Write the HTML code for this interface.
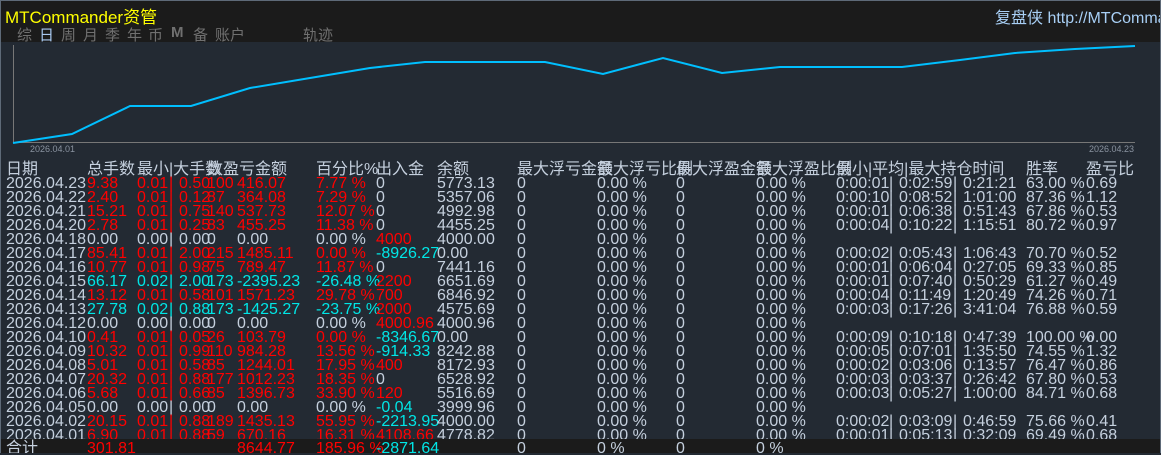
<!DOCTYPE html>
<html><head><meta charset="utf-8"><style>
*{margin:0;padding:0;box-sizing:border-box}
body{width:1161px;height:453px;overflow:hidden;background:#232a33;font-family:"Liberation Sans","Noto Sans CJK SC",sans-serif;position:relative;color:#c5d0de}
#frame{position:absolute;left:0;top:0;width:1161px;height:453px;border:1px solid #5e6a78;border-bottom:none;pointer-events:none}
#hdr{position:absolute;left:0;top:0;width:1161px;height:42px;background:#1b1b1b}
.t{position:absolute;white-space:nowrap}
#title{left:5px;top:3px;font-size:17px;color:#ffff00}
#right{left:995px;top:4px;font-size:16px;color:#a8cff5}
.tab{top:24px;font-size:15px;color:#707070}
#day{left:37px;top:23px;width:18px;height:19px;background:#2c3644;border-radius:2px}
#rows{position:absolute;left:0;top:2px;width:1161px;height:453px}
.r{position:absolute;left:0;width:1161px;height:14px;font-size:16px;line-height:14px}
.r span{position:absolute;top:0;white-space:nowrap}
.R{color:#ff0000}.C{color:#00e6e6}.G{color:#c5d0de}
.a{left:6px}.b{left:87px}.c{left:137px}.bar{left:169px}.d{left:179px}.e{left:207px}.f{left:237px}.g{left:316px}.h{left:376px}.i{left:437px}
.j{left:517px}.k{left:597px}.l{left:676px}.m{left:756px}.n{left:836px}.o{left:889px}.p{left:899px}.q{left:953px}.s{left:963px}.u{left:1026px}.v{left:1086px}
#foot{position:absolute;left:0;top:439px;width:1161px;height:14px;background:#1b1b1b}
</style></head><body>
<div id="hdr"></div>
<div class="t" id="title">MTCommander资管</div>
<div class="t" id="right">复盘侠 http://MTCommander</div>
<div id="day"></div>
<div class="t tab" style="left:17px">综</div>
<div class="t tab" style="left:39px;color:#a8c8f0">日</div>
<div class="t tab" style="left:61px">周</div>
<div class="t tab" style="left:83px">月</div>
<div class="t tab" style="left:105px">季</div>
<div class="t tab" style="left:127px">年</div>
<div class="t tab" style="left:148px">币</div>
<div class="t tab" style="left:171px;font-weight:bold">M</div>
<div class="t tab" style="left:193px">备</div>
<div class="t tab" style="left:215px">账户</div>
<div class="t tab" style="left:303px">轨迹</div>
<svg style="position:absolute;left:0;top:42px" width="1161" height="115">
<line x1="13.5" y1="3" x2="13.5" y2="100" stroke="#777" stroke-width="1"/>
<line x1="13" y1="100.5" x2="1135" y2="100.5" stroke="#777" stroke-width="1"/>
<polyline fill="none" stroke="#00bfff" stroke-width="2" points="13,101 72,92 130,64 191,64 250,46 310,36 370,26 425,20 485,20 545,20 603,32 663,16 722,31 780,25 840,25 902,25 960,18 1015,11 1075,7 1135,4"/>
<text x="30" y="110" font-size="9" fill="#8a93a0" font-family="Liberation Sans">2026.04.01</text>
<text x="1089" y="110" font-size="9" fill="#8a93a0" font-family="Liberation Sans">2026.04.23</text>
</svg>
<div id="foot"></div>
<div id="rows">
<div class="r G" style="top:161px"><span class="a">日期</span><span class="b">总手数</span><span class="c">最小|大手数</span><span class="e">数盈亏金额</span><span class="g">百分比%</span><span class="h">出入金</span><span class="i">余额</span><span class="j">最大浮亏金额</span><span class="k">最大浮亏比例</span><span class="l">最大浮盈金额</span><span class="m">最大浮盈比例</span><span class="n">最小|平均|最大持仓时间</span><span class="u">胜率</span><span class="v">盈亏比</span></div>

<div class="r" style="top:175px"><span class="a G">2026.04.23</span><span class="b R">9.38</span><span class="c R">0.01</span><span class="bar R">|</span><span class="d R">0.50</span><span class="e R">100</span><span class="f R">416.07</span><span class="g R">7.77 %</span><span class="h G">0</span><span class="i G">5773.13</span><span class="j G">0</span><span class="k G">0.00 %</span><span class="l G">0</span><span class="m G">0.00 %</span><span class="n G">0:00:01</span><span class="o G">|</span><span class="p G">0:02:59</span><span class="q G">|</span><span class="s G">0:21:21</span><span class="u G">63.00 %</span><span class="v G">0.69</span></div>
<div class="r" style="top:189px"><span class="a G">2026.04.22</span><span class="b R">2.40</span><span class="c R">0.01</span><span class="bar R">|</span><span class="d R">0.12</span><span class="e R">87</span><span class="f R">364.08</span><span class="g R">7.29 %</span><span class="h G">0</span><span class="i G">5357.06</span><span class="j G">0</span><span class="k G">0.00 %</span><span class="l G">0</span><span class="m G">0.00 %</span><span class="n G">0:00:10</span><span class="o G">|</span><span class="p G">0:08:52</span><span class="q G">|</span><span class="s G">1:01:00</span><span class="u G">87.36 %</span><span class="v G">1.12</span></div>
<div class="r" style="top:203px"><span class="a G">2026.04.21</span><span class="b R">15.21</span><span class="c R">0.01</span><span class="bar R">|</span><span class="d R">0.75</span><span class="e R">140</span><span class="f R">537.73</span><span class="g R">12.07 %</span><span class="h G">0</span><span class="i G">4992.98</span><span class="j G">0</span><span class="k G">0.00 %</span><span class="l G">0</span><span class="m G">0.00 %</span><span class="n G">0:00:01</span><span class="o G">|</span><span class="p G">0:06:38</span><span class="q G">|</span><span class="s G">0:51:43</span><span class="u G">67.86 %</span><span class="v G">0.53</span></div>
<div class="r" style="top:217px"><span class="a G">2026.04.20</span><span class="b R">2.78</span><span class="c R">0.01</span><span class="bar R">|</span><span class="d R">0.25</span><span class="e R">83</span><span class="f R">455.25</span><span class="g R">11.38 %</span><span class="h G">0</span><span class="i G">4455.25</span><span class="j G">0</span><span class="k G">0.00 %</span><span class="l G">0</span><span class="m G">0.00 %</span><span class="n G">0:00:04</span><span class="o G">|</span><span class="p G">0:10:22</span><span class="q G">|</span><span class="s G">1:15:51</span><span class="u G">80.72 %</span><span class="v G">0.97</span></div>
<div class="r" style="top:231px"><span class="a G">2026.04.18</span><span class="b G">0.00</span><span class="c G">0.00</span><span class="bar G">|</span><span class="d G">0.00</span><span class="e G">0</span><span class="f G">0.00</span><span class="g G">0.00 %</span><span class="h R">4000</span><span class="i G">4000.00</span><span class="j G">0</span><span class="k G">0.00 %</span><span class="l G">0</span><span class="m G">0.00 %</span></div>
<div class="r" style="top:245px"><span class="a G">2026.04.17</span><span class="b R">85.41</span><span class="c R">0.01</span><span class="bar R">|</span><span class="d R">2.00</span><span class="e R">215</span><span class="f R">1485.11</span><span class="g R">0.00 %</span><span class="h C">-8926.27</span><span class="i G">0.00</span><span class="j G">0</span><span class="k G">0.00 %</span><span class="l G">0</span><span class="m G">0.00 %</span><span class="n G">0:00:02</span><span class="o G">|</span><span class="p G">0:05:43</span><span class="q G">|</span><span class="s G">1:06:43</span><span class="u G">70.70 %</span><span class="v G">0.52</span></div>
<div class="r" style="top:259px"><span class="a G">2026.04.16</span><span class="b R">10.77</span><span class="c R">0.01</span><span class="bar R">|</span><span class="d R">0.98</span><span class="e R">75</span><span class="f R">789.47</span><span class="g R">11.87 %</span><span class="h G">0</span><span class="i G">7441.16</span><span class="j G">0</span><span class="k G">0.00 %</span><span class="l G">0</span><span class="m G">0.00 %</span><span class="n G">0:00:01</span><span class="o G">|</span><span class="p G">0:06:04</span><span class="q G">|</span><span class="s G">0:27:05</span><span class="u G">69.33 %</span><span class="v G">0.85</span></div>
<div class="r" style="top:273px"><span class="a G">2026.04.15</span><span class="b C">66.17</span><span class="c C">0.02</span><span class="bar C">|</span><span class="d C">2.00</span><span class="e C">173</span><span class="f C">-2395.23</span><span class="g C">-26.48 %</span><span class="h R">2200</span><span class="i G">6651.69</span><span class="j G">0</span><span class="k G">0.00 %</span><span class="l G">0</span><span class="m G">0.00 %</span><span class="n G">0:00:01</span><span class="o G">|</span><span class="p G">0:07:40</span><span class="q G">|</span><span class="s G">0:50:29</span><span class="u G">61.27 %</span><span class="v G">0.49</span></div>
<div class="r" style="top:287px"><span class="a G">2026.04.14</span><span class="b R">13.12</span><span class="c R">0.01</span><span class="bar R">|</span><span class="d R">0.58</span><span class="e R">101</span><span class="f R">1571.23</span><span class="g R">29.78 %</span><span class="h R">700</span><span class="i G">6846.92</span><span class="j G">0</span><span class="k G">0.00 %</span><span class="l G">0</span><span class="m G">0.00 %</span><span class="n G">0:00:04</span><span class="o G">|</span><span class="p G">0:11:49</span><span class="q G">|</span><span class="s G">1:20:49</span><span class="u G">74.26 %</span><span class="v G">0.71</span></div>
<div class="r" style="top:301px"><span class="a G">2026.04.13</span><span class="b C">27.78</span><span class="c C">0.02</span><span class="bar C">|</span><span class="d C">0.88</span><span class="e C">173</span><span class="f C">-1425.27</span><span class="g C">-23.75 %</span><span class="h R">2000</span><span class="i G">4575.69</span><span class="j G">0</span><span class="k G">0.00 %</span><span class="l G">0</span><span class="m G">0.00 %</span><span class="n G">0:00:03</span><span class="o G">|</span><span class="p G">0:17:26</span><span class="q G">|</span><span class="s G">3:41:04</span><span class="u G">76.88 %</span><span class="v G">0.59</span></div>
<div class="r" style="top:315px"><span class="a G">2026.04.12</span><span class="b G">0.00</span><span class="c G">0.00</span><span class="bar G">|</span><span class="d G">0.00</span><span class="e G">0</span><span class="f G">0.00</span><span class="g G">0.00 %</span><span class="h R">4000.96</span><span class="i G">4000.96</span><span class="j G">0</span><span class="k G">0.00 %</span><span class="l G">0</span><span class="m G">0.00 %</span></div>
<div class="r" style="top:329px"><span class="a G">2026.04.10</span><span class="b R">0.41</span><span class="c R">0.01</span><span class="bar R">|</span><span class="d R">0.05</span><span class="e R">26</span><span class="f R">103.79</span><span class="g R">0.00 %</span><span class="h C">-8346.67</span><span class="i G">0.00</span><span class="j G">0</span><span class="k G">0.00 %</span><span class="l G">0</span><span class="m G">0.00 %</span><span class="n G">0:00:09</span><span class="o G">|</span><span class="p G">0:10:18</span><span class="q G">|</span><span class="s G">0:47:39</span><span class="u G">100.00 %</span><span class="v G">0.00</span></div>
<div class="r" style="top:343px"><span class="a G">2026.04.09</span><span class="b R">10.32</span><span class="c R">0.01</span><span class="bar R">|</span><span class="d R">0.99</span><span class="e R">110</span><span class="f R">984.28</span><span class="g R">13.56 %</span><span class="h C">-914.33</span><span class="i G">8242.88</span><span class="j G">0</span><span class="k G">0.00 %</span><span class="l G">0</span><span class="m G">0.00 %</span><span class="n G">0:00:05</span><span class="o G">|</span><span class="p G">0:07:01</span><span class="q G">|</span><span class="s G">1:35:50</span><span class="u G">74.55 %</span><span class="v G">1.32</span></div>
<div class="r" style="top:357px"><span class="a G">2026.04.08</span><span class="b R">5.01</span><span class="c R">0.01</span><span class="bar R">|</span><span class="d R">0.58</span><span class="e R">85</span><span class="f R">1244.01</span><span class="g R">17.95 %</span><span class="h R">400</span><span class="i G">8172.93</span><span class="j G">0</span><span class="k G">0.00 %</span><span class="l G">0</span><span class="m G">0.00 %</span><span class="n G">0:00:02</span><span class="o G">|</span><span class="p G">0:03:06</span><span class="q G">|</span><span class="s G">0:13:57</span><span class="u G">76.47 %</span><span class="v G">0.86</span></div>
<div class="r" style="top:371px"><span class="a G">2026.04.07</span><span class="b R">20.32</span><span class="c R">0.01</span><span class="bar R">|</span><span class="d R">0.88</span><span class="e R">177</span><span class="f R">1012.23</span><span class="g R">18.35 %</span><span class="h G">0</span><span class="i G">6528.92</span><span class="j G">0</span><span class="k G">0.00 %</span><span class="l G">0</span><span class="m G">0.00 %</span><span class="n G">0:00:03</span><span class="o G">|</span><span class="p G">0:03:37</span><span class="q G">|</span><span class="s G">0:26:42</span><span class="u G">67.80 %</span><span class="v G">0.53</span></div>
<div class="r" style="top:385px"><span class="a G">2026.04.06</span><span class="b R">5.68</span><span class="c R">0.01</span><span class="bar R">|</span><span class="d R">0.66</span><span class="e R">85</span><span class="f R">1396.73</span><span class="g R">33.90 %</span><span class="h R">120</span><span class="i G">5516.69</span><span class="j G">0</span><span class="k G">0.00 %</span><span class="l G">0</span><span class="m G">0.00 %</span><span class="n G">0:00:03</span><span class="o G">|</span><span class="p G">0:05:27</span><span class="q G">|</span><span class="s G">1:00:00</span><span class="u G">84.71 %</span><span class="v G">0.68</span></div>
<div class="r" style="top:399px"><span class="a G">2026.04.05</span><span class="b G">0.00</span><span class="c G">0.00</span><span class="bar G">|</span><span class="d G">0.00</span><span class="e G">0</span><span class="f G">0.00</span><span class="g G">0.00 %</span><span class="h C">-0.04</span><span class="i G">3999.96</span><span class="j G">0</span><span class="k G">0.00 %</span><span class="l G">0</span><span class="m G">0.00 %</span></div>
<div class="r" style="top:413px"><span class="a G">2026.04.02</span><span class="b R">20.15</span><span class="c R">0.01</span><span class="bar R">|</span><span class="d R">0.88</span><span class="e R">189</span><span class="f R">1435.13</span><span class="g R">55.95 %</span><span class="h C">-2213.95</span><span class="i G">4000.00</span><span class="j G">0</span><span class="k G">0.00 %</span><span class="l G">0</span><span class="m G">0.00 %</span><span class="n G">0:00:02</span><span class="o G">|</span><span class="p G">0:03:09</span><span class="q G">|</span><span class="s G">0:46:59</span><span class="u G">75.66 %</span><span class="v G">0.41</span></div>
<div class="r" style="top:427px"><span class="a G">2026.04.01</span><span class="b R">6.90</span><span class="c R">0.01</span><span class="bar R">|</span><span class="d R">0.88</span><span class="e R">59</span><span class="f R">670.16</span><span class="g R">16.31 %</span><span class="h R">4108.66</span><span class="i G">4778.82</span><span class="j G">0</span><span class="k G">0.00 %</span><span class="l G">0</span><span class="m G">0.00 %</span><span class="n G">0:00:01</span><span class="o G">|</span><span class="p G">0:05:13</span><span class="q G">|</span><span class="s G">0:32:09</span><span class="u G">69.49 %</span><span class="v G">0.68</span></div>
</div>
<div id="foot" style="background:#1b1b1b;overflow:hidden"><div class="r" style="top:3px"><span class="a G">合计</span><span class="b R">301.81</span><span class="f R">8644.77</span><span class="g R">185.96 %</span><span class="h C">-2871.64</span><span class="j G">0</span><span class="k G">0 %</span><span class="l G">0</span><span class="m G">0 %</span></div></div>
<div id="frame"></div>
</body></html>
